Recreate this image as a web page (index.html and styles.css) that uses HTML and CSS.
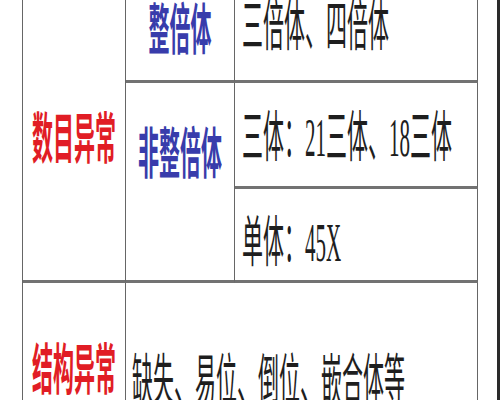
FILE: index.html
```html
<!DOCTYPE html>
<html lang="zh-CN">
<head>
<meta charset="utf-8">
<title>染色体异常</title>
<link rel="stylesheet" href="styles.css">
</head>
<body>
<div class="page">
  <div class="table">
    <div class="cell c1 label-red"><span class="txt">数目异常</span></div>
    <div class="cell c2 label-blue"><span class="txt">整倍体</span></div>
    <div class="cell c3 body-text"><span class="txt">三倍体、四倍体</span></div>
    <div class="cell c4 label-blue"><span class="txt">非整倍体</span></div>
    <div class="cell c5 body-text"><span class="txt">三体：21三体、18三体</span></div>
    <div class="cell c6 body-text"><span class="txt">单体：45X</span></div>
    <div class="cell c7 label-red"><span class="txt">结构异常</span></div>
    <div class="cell c8 body-text"><span class="txt">缺失、易位、倒位、嵌合体等</span></div>
  </div>
</div>
</body>
</html>
```

FILE: styles.css
```css
html, body {
  margin: 0;
  padding: 0;
  background: #ffffff;
}

.page {
  width: 500px;
  height: 400px;
  overflow: hidden;
  box-sizing: border-box;
  border-right: 3px solid #2a2a2a;
  background: #ffffff;
}

.table {
  margin-left: 22px;
  margin-top: -26px;
  width: 456px;
  display: grid;
  grid-template-columns: 103px 109px 243px;
  grid-template-rows: 109px 106px 94px 140px;
  border-left: 1px solid #666;
}

.cell {
  box-sizing: border-box;
  border-right: 1px solid #666;
  font-size: 21px;
  line-height: 22px;
  white-space: nowrap;
}

.txt {
  display: block;
  transform: scaleY(2.6);
}

.label-red {
  font-family: "Noto Sans CJK SC", sans-serif;
  font-weight: 700;
  color: #e11d25;
  text-align: center;
}

.label-blue {
  font-family: "Noto Sans CJK SC", sans-serif;
  font-weight: 700;
  color: #383cab;
  text-align: center;
}

.body-text {
  font-family: "Liberation Serif", "Noto Sans CJK SC", serif;
  font-weight: 400;
  color: #1e1e1e;
  text-align: left;
}

.c1 {
  grid-column: 1;
  grid-row: 1 / 4;
  border-bottom: 3px solid #727272;
  padding-top: 150px;
}

.c2 {
  grid-column: 2;
  grid-row: 1;
  border-bottom: 3px solid #727272;
  padding-top: 41px;
}

.c3 {
  grid-column: 3;
  grid-row: 1;
  border-bottom: 3px solid #727272;
  padding-top: 42px;
  padding-left: 7px;
}

.c4 {
  grid-column: 2;
  grid-row: 2 / 4;
  border-bottom: 3px solid #727272;
  padding-top: 56px;
}

.c5 {
  grid-column: 3;
  grid-row: 2;
  border-bottom: 3px solid #727272;
  padding-top: 44px;
  padding-left: 7px;
}

.c6 {
  grid-column: 3;
  grid-row: 3;
  border-bottom: 3px solid #727272;
  padding-top: 43px;
  padding-left: 7px;
}

.c7 {
  grid-column: 1;
  grid-row: 4;
  padding-top: 72px;
}

.c8 {
  grid-column: 2 / 4;
  grid-row: 4;
  padding-top: 87px;
  padding-left: 6px;
}
```
